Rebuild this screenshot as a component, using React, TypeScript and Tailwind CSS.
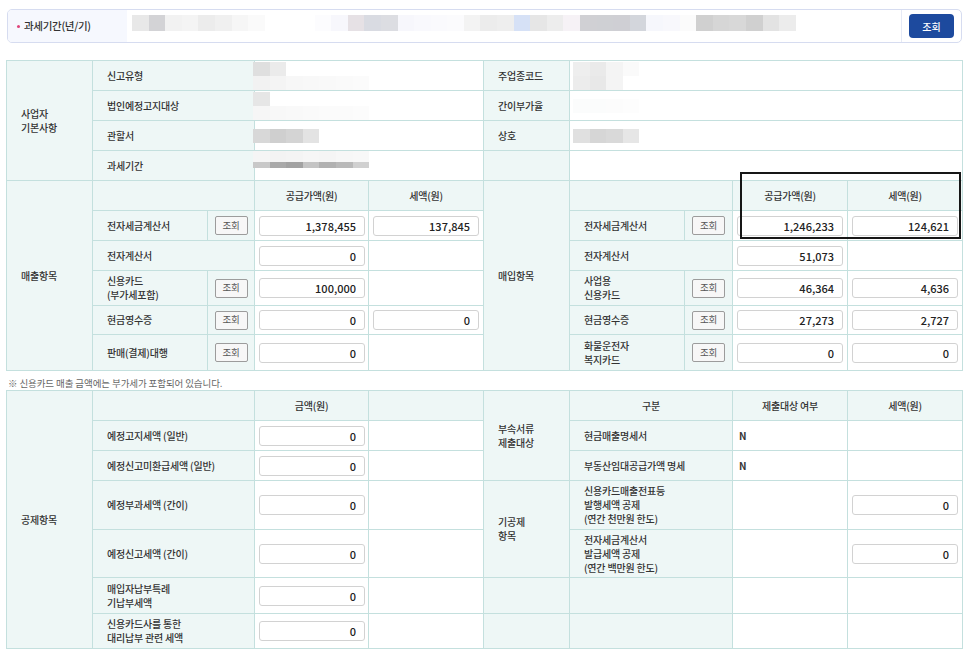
import React from 'react';

// shared cell styles
const BD = 'border border-[#c4e0de]';
const LBL = `${BD} bg-[#eef7f6] pl-[14px] text-left align-middle`;
const HEAD = `${BD} bg-[#eef7f6] text-center align-middle`;
const VAL = `${BD} bg-white p-0 align-middle`;
const FILL = `${BD} bg-[#eef7f6]`;

// mosaic colours for the masked header values (each square ~16.6px)
const HEADER_MOSAIC = [
  '#e8e8e8', '#d3d3d6', '#f2f2f2', '#f4f4f4', '#ececec', '#f0f0f0', '#f6f6f6', '#fafafa',
  '#ffffff', '#ffffff', '#ffffff', '#fcfcfe', '#f7f7fc', '#e6e1e5', '#d9dbe2', '#dcdde2',
  '#f7f7fc', '#f9f9fd', '#fafafd', '#fbfbfd', '#f3f3f3', '#ececec', '#eeeeee', '#d6e1f6',
  '#e6e6e6', '#ededed', '#f6f2f6', '#d0d0d4', '#cfd0d4', '#cfcfd4', '#d3d6dc', '#f6f7fc',
  '#f8f8fc', '#fbfbfb', '#d0d0d0', '#d6d6d6', '#d8d8d8', '#d0d0d0', '#e3e3e3', '#ececec',
];

const Mosaic: React.FC<{ rows: string[][] }> = ({ rows }) => (
  <div className="-ml-[2px] flex flex-col">
    {rows.map((row, r) => (
      <div key={r} className="flex">
        {row.map((c, i) => (
          <div key={i} className="h-[14px] w-[16.6px]" style={{ backgroundColor: c }} />
        ))}
      </div>
    ))}
  </div>
);

const Num: React.FC<{ v: string }> = ({ v }) => (
  <input
    readOnly
    value={v}
    className="ml-[4px] block h-[20px] w-[106px] rounded-[3px] border border-[#d2d2d2] bg-white pr-[8px] text-right text-[11px] font-medium tracking-normal text-[#222] outline-none"
  />
);

const Btn: React.FC = () => (
  <button
    type="button"
    className="mx-auto block h-[19px] w-[33px] rounded-[2px] border border-[#9c9c9c] bg-[#f7f7f7] text-[9.5px] font-normal leading-none text-[#555]"
  >
    조회
  </button>
);

const Cols: React.FC = () => (
  <colgroup>
    <col className="w-[86px]" />
    <col className="w-[115px]" />
    <col className="w-[47px]" />
    <col className="w-[114px]" />
    <col className="w-[115px]" />
    <col className="w-[86px]" />
    <col className="w-[115px]" />
    <col className="w-[48px]" />
    <col className="w-[115px]" />
    <col className="w-[115px]" />
  </colgroup>
);

export default function App() {
  return (
    <div className="relative min-h-[652px] w-[966px] bg-white pl-[6px] pr-[4px] pt-[9px] font-['Noto_Sans_CJK_KR','Noto_Sans',sans-serif] text-[#333]">
      {/* ── Search bar ── */}
      <div className="ml-[1px] flex h-[34px] items-stretch overflow-hidden rounded-[5px] border border-[#d6dcf0]">
        <div className="flex w-[119px] items-center gap-[4px] bg-[#f6f8fe] pl-[9px] text-[10.5px] font-medium tracking-[-0.03em] text-[#333]">
          <span className="h-[3px] w-[3px] rounded-full bg-[#e0457b]" />
          과세기간(년/기)
        </div>
        <div className="ml-[5px] mt-[5px] flex flex-1 self-start">
          {HEADER_MOSAIC.map((c, i) => (
            <div key={i} className="h-[16px] w-[16.6px]" style={{ backgroundColor: c }} />
          ))}
        </div>
        <div className="flex w-[60px] items-center justify-center border-l border-[#e6eaf5]">
          <button
            type="button"
            className="h-[24px] w-[45px] rounded-[4px] bg-[#1d4a9e] text-[10px] font-medium text-white"
          >
            조회
          </button>
        </div>
      </div>

      {/* ── Basic info + sales/purchase ── */}
      <table className="mt-[17px] w-[956px] table-fixed border-collapse text-[10px] font-medium leading-[14px] tracking-[-0.02em]">
        <Cols />
        <tbody>
          <tr className="h-[30px]">
            <td rowSpan={4} className={LBL}>사업자<br />기본사항</td>
            <td colSpan={2} className={LBL}>신고유형</td>
            <td colSpan={2} className={VAL}>
              <Mosaic rows={[['#dfdfdf', '#ebebeb'], ['#f2f2f2', '#f4f4f4', '#f7f7f7', '#f8f8f8', '#f9f9f9', '#fafafa', '#fbfbfb']]} />
            </td>
            <td className={LBL}>주업종코드</td>
            <td colSpan={4} className={VAL}>
              <div className="ml-[5px]">
                <Mosaic rows={[['#eeeeee', '#eaeaea', '#f4f4f4', '#fafafa'], ['#ececec', '#e8e8e8', '#f4f4f4', '#ffffff']]} />
              </div>
            </td>
          </tr>
          <tr className="h-[30px]">
            <td colSpan={2} className={LBL}>법인예정고지대상</td>
            <td colSpan={2} className={VAL}>
              <Mosaic rows={[['#e6e6e6'], ['#f6f6f6', '#f8f8f8', '#f9f9f9', '#fafafa', '#fbfbfb', '#fbfbfb', '#fcfcfc']]} />
            </td>
            <td className={LBL}>간이부가율</td>
            <td colSpan={4} className={VAL}>
              <div className="ml-[5px]">
                <Mosaic rows={[['#fbfcfc', '#fbfcfc', '#fcfcfc', '#fdfdfd']]} />
              </div>
            </td>
          </tr>
          <tr className="h-[30px]">
            <td colSpan={2} className={LBL}>관할서</td>
            <td colSpan={2} className={VAL}>
              <Mosaic rows={[['#d8d8d8', '#cfcfcf', '#d4d4d4', '#e3e3e3']]} />
            </td>
            <td className={LBL}>상호</td>
            <td colSpan={4} className={VAL}>
              <div className="ml-[5px]">
                <Mosaic rows={[['#e0e0e0', '#d6d6d6', '#d9d9d9', '#e6e6e6']]} />
              </div>
            </td>
          </tr>
          <tr className="h-[30px]">
            <td colSpan={2} className={LBL}>과세기간</td>
            <td colSpan={2} className={`${VAL} align-top`}>
              <div className="-ml-[2px] flex flex-col">
                <div className="flex">
                  {['#f5f5f5', '#f3f3f3', '#f4f4f4', '#f6f6f6', '#f5f5f5', '#f7f7f7', '#f8f8f8'].map((c, i) => (
                    <div key={i} className="h-[11px] w-[16.6px]" style={{ backgroundColor: c }} />
                  ))}
                </div>
                <div className="flex">
                  {['#c8c8c8', '#a9a9a9', '#a2a2a2', '#c4c4c4', '#b1b1b1', '#b9b9b9', '#d0d0d0'].map((c, i) => (
                    <div key={i} className="h-[6px] w-[16.6px]" style={{ backgroundColor: c }} />
                  ))}
                </div>
              </div>
            </td>
            <td className={FILL} />
            <td colSpan={4} className={VAL} />
          </tr>

          {/* sales / purchase header */}
          <tr className="h-[30px]">
            <td rowSpan={6} className={LBL}>매출항목</td>
            <td colSpan={2} className={FILL} />
            <td className={HEAD}>공급가액(원)</td>
            <td className={HEAD}>세액(원)</td>
            <td rowSpan={6} className={LBL}>매입항목</td>
            <td colSpan={2} className={FILL} />
            <td className={HEAD}>공급가액(원)</td>
            <td className={HEAD}>세액(원)</td>
          </tr>
          <tr className="h-[30px]">
            <td className={LBL}>전자세금계산서</td>
            <td className={FILL}><Btn /></td>
            <td className={VAL}><Num v="1,378,455" /></td>
            <td className={VAL}><Num v="137,845" /></td>
            <td className={LBL}>전자세금계산서</td>
            <td className={FILL}><Btn /></td>
            <td className={VAL}><Num v="1,246,233" /></td>
            <td className={VAL}><Num v="124,621" /></td>
          </tr>
          <tr className="h-[30px]">
            <td colSpan={2} className={LBL}>전자계산서</td>
            <td className={VAL}><Num v="0" /></td>
            <td className={VAL} />
            <td colSpan={2} className={LBL}>전자계산서</td>
            <td className={VAL}><Num v="51,073" /></td>
            <td className={VAL} />
          </tr>
          <tr className="h-[35px]">
            <td className={LBL}>신용카드<br />(부가세포함)</td>
            <td className={FILL}><Btn /></td>
            <td className={VAL}><Num v="100,000" /></td>
            <td className={VAL} />
            <td className={LBL}>사업용<br />신용카드</td>
            <td className={FILL}><Btn /></td>
            <td className={VAL}><Num v="46,364" /></td>
            <td className={VAL}><Num v="4,636" /></td>
          </tr>
          <tr className="h-[29px]">
            <td className={LBL}>현금영수증</td>
            <td className={FILL}><Btn /></td>
            <td className={VAL}><Num v="0" /></td>
            <td className={VAL}><Num v="0" /></td>
            <td className={LBL}>현금영수증</td>
            <td className={FILL}><Btn /></td>
            <td className={VAL}><Num v="27,273" /></td>
            <td className={VAL}><Num v="2,727" /></td>
          </tr>
          <tr className="h-[36px]">
            <td className={LBL}>판매(결제)대행</td>
            <td className={FILL}><Btn /></td>
            <td className={VAL}><Num v="0" /></td>
            <td className={VAL} />
            <td className={LBL}>화물운전자<br />복지카드</td>
            <td className={FILL}><Btn /></td>
            <td className={VAL}><Num v="0" /></td>
            <td className={VAL}><Num v="0" /></td>
          </tr>
        </tbody>
      </table>

      <p className="flex h-[19px] items-center pl-[2px] pt-[6px] text-[9.5px] tracking-[-0.01em] text-[#666]">
        ※ 신용카드 매출 금액에는 부가세가 포함되어 있습니다.
      </p>

      {/* ── Deductions / attachments ── */}
      <table className="w-[956px] table-fixed border-collapse text-[10px] font-medium leading-[14px] tracking-[-0.02em]">
        <Cols />
        <tbody>
          <tr className="h-[30px]">
            <td rowSpan={7} className={LBL}>공제항목</td>
            <td colSpan={2} className={FILL} />
            <td className={HEAD}>금액(원)</td>
            <td className={FILL} />
            <td rowSpan={3} className={LBL}>부속서류<br />제출대상</td>
            <td colSpan={2} className={HEAD}>구분</td>
            <td className={HEAD}>제출대상 여부</td>
            <td className={HEAD}>세액(원)</td>
          </tr>
          <tr className="h-[30px]">
            <td colSpan={2} className={LBL}>예정고지세액 (일반)</td>
            <td className={VAL}><Num v="0" /></td>
            <td className={VAL} />
            <td colSpan={2} className={LBL}>현금매출명세서</td>
            <td className={`${VAL} pl-[6px] font-bold`}>N</td>
            <td className={VAL} />
          </tr>
          <tr className="h-[30px]">
            <td colSpan={2} className={LBL}>예정신고미환급세액 (일반)</td>
            <td className={VAL}><Num v="0" /></td>
            <td className={VAL} />
            <td colSpan={2} className={LBL}>부동산임대공급가액 명세</td>
            <td className={`${VAL} pl-[6px] font-bold`}>N</td>
            <td className={VAL} />
          </tr>
          <tr className="h-[49px]">
            <td colSpan={2} className={LBL}>예정부과세액 (간이)</td>
            <td className={VAL}><Num v="0" /></td>
            <td className={VAL} />
            <td rowSpan={2} className={LBL}>기공제<br />항목</td>
            <td colSpan={2} className={LBL}>신용카드매출전표등<br />발행세액 공제<br />(연간 천만원 한도)</td>
            <td className={VAL} />
            <td className={VAL}><Num v="0" /></td>
          </tr>
          <tr className="h-[48px]">
            <td colSpan={2} className={LBL}>예정신고세액 (간이)</td>
            <td className={VAL}><Num v="0" /></td>
            <td className={VAL} />
            <td colSpan={2} className={LBL}>전자세금계산서<br />발급세액 공제<br />(연간 백만원 한도)</td>
            <td className={VAL} />
            <td className={VAL}><Num v="0" /></td>
          </tr>
          <tr className="h-[36px]">
            <td colSpan={2} className={LBL}>매입자납부특례<br />기납부세액</td>
            <td className={VAL}><Num v="0" /></td>
            <td className={VAL} />
            <td className={FILL} />
            <td colSpan={2} className={FILL} />
            <td className={VAL} />
            <td className={VAL} />
          </tr>
          <tr className="h-[35px]">
            <td colSpan={2} className={LBL}>신용카드사를 통한<br />대리납부 관련 세액</td>
            <td className={VAL}><Num v="0" /></td>
            <td className={VAL} />
            <td className={FILL} />
            <td colSpan={2} className={FILL} />
            <td className={VAL} />
            <td className={VAL} />
          </tr>
        </tbody>
      </table>

      {/* annotation frame drawn over the purchase header */}
      <div className="pointer-events-none absolute left-[740px] top-[172px] h-[67px] w-[221px] border-2 border-[#161616]" />
    </div>
  );
}
